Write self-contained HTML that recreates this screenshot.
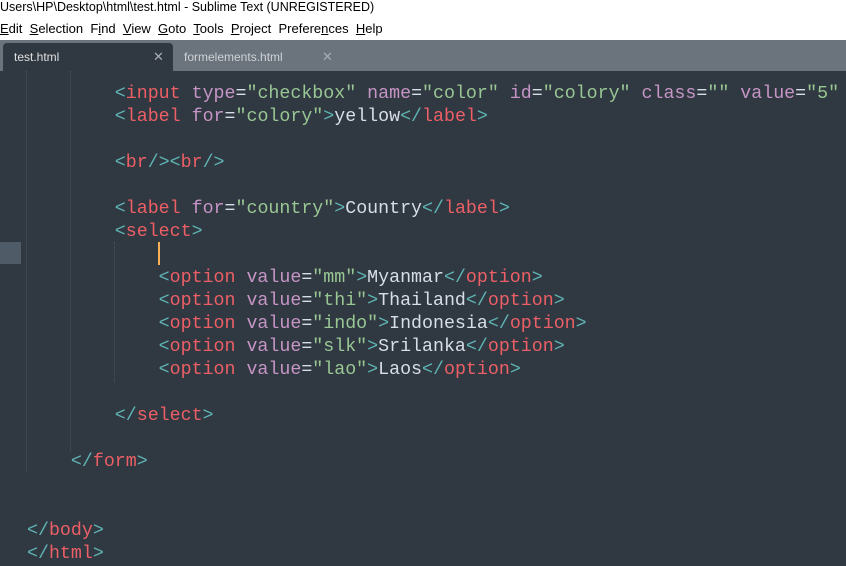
<!DOCTYPE html>
<html><head><style>
body{margin:0;width:846px;height:564px;overflow:hidden;background:#303841;font-family:"Liberation Sans",sans-serif;position:relative}
.title{position:absolute;left:0;top:0;width:846px;height:17px;background:#fff;font-size:12.5px;line-height:15px;color:#000}
.menu{position:absolute;left:0;top:17px;width:846px;height:23px;background:#fff;font-size:13px;line-height:23px;color:#000;white-space:pre}
.tabs{position:absolute;left:0;top:40px;width:846px;height:31px;background:#6b737c}
.tab{position:absolute;top:3px;height:28px;font-size:12px;line-height:28px;color:#e0e0e0}
.t1{left:3px;width:170px;background:#303841;border-radius:4px 4px 0 0}
.t2{left:174px;width:170px;color:#cfd3d7}
.x{position:absolute;top:0;font-size:13px;color:#aab}
.code{position:absolute;left:27px;top:83px;font-family:"Liberation Mono",monospace;font-size:18.3px;line-height:23px;white-space:pre;color:#d8dee9}
.b{color:#5fb4b4}.t{color:#ec5f66}.a{color:#c695c6}.s{color:#99c794}
.g{position:absolute;width:0;border-left:1px dotted #4a535c}
</style></head><body>
<div class="title">Users\HP\Desktop\html\test.html - Sublime Text (UNREGISTERED)</div>
<div class="menu"><u>E</u>dit  <u>S</u>election  F<u>i</u>nd  <u>V</u>iew  <u>G</u>oto  <u>T</u>ools  <u>P</u>roject  Prefere<u>n</u>ces  <u>H</u>elp</div>
<div class="tabs">
<div class="tab t1"><span style="margin-left:11px">test.html</span><span class="x" style="left:150px">✕</span></div>
<div class="tab t2"><span style="margin-left:10px">formelements.html</span><span class="x" style="left:148px">✕</span></div>
</div>
<div style="position:absolute;left:0;top:242px;width:21px;height:22px;background:#4f5b66"></div>
<div class="g" style="left:26px;top:71px;height:400px"></div>
<div class="g" style="left:70px;top:71px;height:380px"></div>
<div class="g" style="left:114px;top:242px;height:140px"></div>
<div style="position:absolute;left:158px;top:242px;width:2px;height:23px;background:#f9ae58"></div>
<div class="code">        <span class="b">&lt;</span><span class="t">input</span> <span class="a">type</span>=<span class="s">"checkbox"</span> <span class="a">name</span>=<span class="s">"color"</span> <span class="a">id</span>=<span class="s">"colory"</span> <span class="a">class</span>=<span class="s">""</span> <span class="a">value</span>=<span class="s">"5"</span>
        <span class="b">&lt;</span><span class="t">label</span> <span class="a">for</span>=<span class="s">"colory"</span><span class="b">&gt;</span>yellow<span class="b">&lt;/</span><span class="t">label</span><span class="b">&gt;</span>

        <span class="b">&lt;</span><span class="t">br</span><span class="b">/&gt;&lt;</span><span class="t">br</span><span class="b">/&gt;</span>

        <span class="b">&lt;</span><span class="t">label</span> <span class="a">for</span>=<span class="s">"country"</span><span class="b">&gt;</span>Country<span class="b">&lt;/</span><span class="t">label</span><span class="b">&gt;</span>
        <span class="b">&lt;</span><span class="t">select</span><span class="b">&gt;</span>

            <span class="b">&lt;</span><span class="t">option</span> <span class="a">value</span>=<span class="s">"mm"</span><span class="b">&gt;</span>Myanmar<span class="b">&lt;/</span><span class="t">option</span><span class="b">&gt;</span>
            <span class="b">&lt;</span><span class="t">option</span> <span class="a">value</span>=<span class="s">"thi"</span><span class="b">&gt;</span>Thailand<span class="b">&lt;/</span><span class="t">option</span><span class="b">&gt;</span>
            <span class="b">&lt;</span><span class="t">option</span> <span class="a">value</span>=<span class="s">"indo"</span><span class="b">&gt;</span>Indonesia<span class="b">&lt;/</span><span class="t">option</span><span class="b">&gt;</span>
            <span class="b">&lt;</span><span class="t">option</span> <span class="a">value</span>=<span class="s">"slk"</span><span class="b">&gt;</span>Srilanka<span class="b">&lt;/</span><span class="t">option</span><span class="b">&gt;</span>
            <span class="b">&lt;</span><span class="t">option</span> <span class="a">value</span>=<span class="s">"lao"</span><span class="b">&gt;</span>Laos<span class="b">&lt;/</span><span class="t">option</span><span class="b">&gt;</span>

        <span class="b">&lt;/</span><span class="t">select</span><span class="b">&gt;</span>

    <span class="b">&lt;/</span><span class="t">form</span><span class="b">&gt;</span>


<span class="b">&lt;/</span><span class="t">body</span><span class="b">&gt;</span>
<span class="b">&lt;/</span><span class="t">html</span><span class="b">&gt;</span></div>
</body></html>
